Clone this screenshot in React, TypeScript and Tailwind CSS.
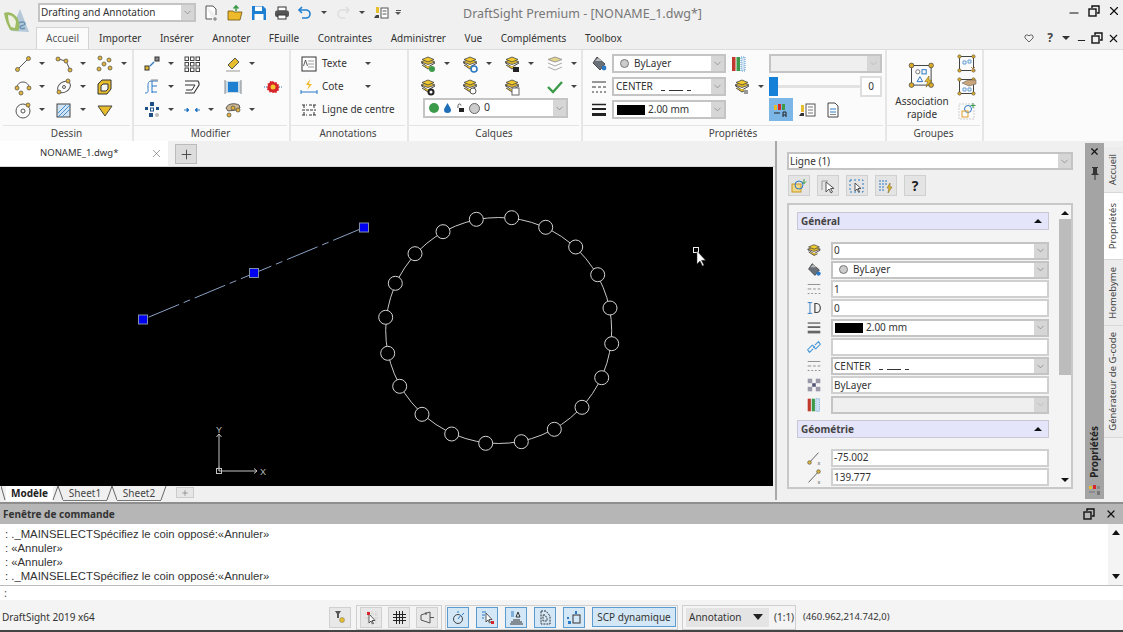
import type { ReactNode } from 'react';
import { ChevronDown, X, Plus, Minus } from 'lucide-react';

// ─── Small parts ──────────────────────────────────────────────────────────────

function Caret() {
  return <span className="ml-[7px] w-0 h-0 flex-shrink-0 border-l-[3px] border-r-[3px] border-t-[3px] border-l-transparent border-r-transparent border-t-[#444]" />;
}

function Svg({ children, size = 18 }: { children: ReactNode; size?: number }) {
  return (
    <svg width={size} height={size} viewBox="0 0 18 18" fill="none" className="flex-shrink-0">
      {children}
    </svg>
  );
}

function Dot({ x, y, r = 2 }: { x: number; y: number; r?: number }) {
  return <circle cx={x} cy={y} r={r} fill="#e3b33b" stroke="#5a5a4a" strokeWidth="0.8" />;
}

function LayerIcon({ badge }: { badge?: ReactNode }) {
  return (
    <Svg>
      <path d="M9 9.5 2 7l7-3 7 3z" fill="#e5bd2d" stroke="#444" strokeWidth="0.8" />
      <path d="M2 7.5 9 12l7-4" fill="none" stroke="#444" strokeWidth="1" />
      <path d="M3 4.5 9 2l6 2.5L9 7z" fill="#f0c92f" stroke="#444" strokeWidth="0.8" />
      <path d="M3 10 9 14l4-2" fill="#e5bd2d" stroke="#444" strokeWidth="0.9" />
      {badge}
    </Svg>
  );
}

function Combo({ className, children, disabled }: { className: string; children?: ReactNode; disabled?: boolean }) {
  return (
    <div className={`flex items-stretch border-2 border-[#c4c4c4] ${disabled ? 'bg-[#efefef]' : 'bg-white'} ${className}`}>
      <div className="flex-1 min-w-0 flex items-center pl-[1px] overflow-hidden whitespace-nowrap">{children}</div>
      <div className="w-[13px] bg-[#d6d6d6] flex items-center justify-center">
        <ChevronDown size={11} strokeWidth={1.2} className={disabled ? 'text-[#aaa]' : 'text-[#666]'} />
      </div>
    </div>
  );
}

function Field({ children }: { children?: ReactNode }) {
  return <div className="h-[18px] flex items-center border-2 border-[#d0d0d0] bg-white pl-[1px] text-[10px] text-[#333] overflow-hidden whitespace-nowrap">{children}</div>;
}

function LinetypeIcon({ faded }: { faded?: boolean }) {
  const c = faded ? '#888' : '#333';
  return (
    <Svg>
      <path d="M2 4h14" stroke={c} />
      <path d="M2 9h4m2 0h3m2 0h3" stroke={c} />
      <path d="M2 14h2m2 0h2m2 0h2m2 0h2" stroke={c} />
    </Svg>
  );
}

function WeightIcon({ faded }: { faded?: boolean }) {
  const c = faded ? '#666' : '#222';
  return (
    <Svg>
      <path d="M2 3.5h14" stroke={c} strokeWidth="1.5" />
      <path d="M2 8h14" stroke={c} strokeWidth="2" />
      <path d="M2 13.5h14" stroke={c} strokeWidth="3" />
    </Svg>
  );
}

function FillIcon() {
  return (
    <Svg>
      <path d="M7 2 15 9l-5 6-7-7z" fill="#6a7078" stroke="#333" strokeWidth="0.8" />
      <path d="M5 6h7l-4-3z" fill="#bbb" />
      <circle cx="14" cy="13" r="2.4" fill="#2b78c4" />
    </Svg>
  );
}

function StripesIcon() {
  return (
    <Svg>
      <rect x="2" y="2" width="3.5" height="14" fill="#c0392b" />
      <rect x="6.5" y="2" width="3.5" height="14" fill="#3c9b4a" />
      <rect x="11" y="2" width="4" height="14" fill="#cfe3f4" stroke="#3a87c8" strokeWidth="0.8" strokeDasharray="1 1" />
    </Svg>
  );
}

// ─── Title bar ────────────────────────────────────────────────────────────────

function Logo() {
  return (
    <svg width="28" height="26" viewBox="0 0 28 26" className="flex-shrink-0 translate-y-[8px]">
      <path d="M18 1 27 24 9 23z" fill="#b4c8d8" />
      <path d="M2 5c5-2 11 1 14 6 2 5 2 9 0 12l-8-1C5 17 3 11 2 5z" fill="#9dbb62" />
      <path d="M6 7c4 0 7 3 8 7l-1 6-4-1C7 15 6 11 6 7z" fill="#eef0e4" />
      <path d="M17 15c3-2 6-1 6 1s-5 1-5 3 3 2 5 1" fill="none" stroke="#6a95b4" strokeWidth="1.5" />
    </svg>
  );
}

function TitleBar() {
  return (
    <div className="h-[27px] flex items-center flex-shrink-0 pl-[2px] pb-[2px]">
      <Logo />
      <Combo className="ml-[8px] w-[158px] h-[19px] text-[10px] text-[#333]">Drafting and Annotation</Combo>
      <div className="ml-[3px] flex items-center">
        <div className="ml-[3px] w-[18px]">
          <Svg><path d="M4 2h7l3 3v6M4 2v13h6" stroke="#555" fill="#fff" /><path d="M13 13v4m-2-2h4" stroke="#777" /></Svg>
        </div>
        <div className="ml-[6px] w-[18px]">
          <Svg><path d="M2 7h5l1 1h8l-2 8H2z" fill="#eeb92a" stroke="#6b5310" strokeWidth="0.8" /><path d="M10 7V2M7.5 4.5 10 2l2.5 2.5" stroke="#3c9b4a" strokeWidth="1.6" /></Svg>
        </div>
        <div className="ml-[6px] w-[18px]">
          <Svg><path d="M2 2h11l3 3v11H2z" fill="#1f7fd1" /><rect x="5" y="2.5" width="7" height="4.5" fill="#fff" /><rect x="4.5" y="10" width="9" height="6" fill="#fff" /></Svg>
        </div>
        <div className="ml-[5px] w-[18px]">
          <Svg><rect x="5" y="3" width="8" height="4" fill="#fff" stroke="#333" /><rect x="2" y="6.5" width="14" height="6.5" rx="2" fill="#555" /><rect x="5" y="11" width="8" height="4" fill="#fff" stroke="#333" /></Svg>
        </div>
        <div className="ml-[5px] w-[18px]">
          <Svg><path d="M6 3 3 6l3 3" stroke="#1f7fd1" strokeWidth="1.6" /><path d="M3 6h7a4 4 0 0 1 0 8H6" stroke="#1f7fd1" strokeWidth="1.6" /></Svg>
        </div>
        <Caret />
        <div className="ml-[7px] w-[18px]">
          <Svg><path d="M12 3l3 3-3 3" stroke="#ddd" strokeWidth="1.5" /><path d="M15 6H8a4 4 0 0 0 0 8h3" stroke="#ddd" strokeWidth="1.5" /></Svg>
        </div>
        <Caret />
        <div className="ml-[7px] w-[18px]">
          <Svg><path d="M4 3h3v6H4z" fill="#e5bd2d" /><path d="M2 14h5v-3H4z" fill="#444" /><rect x="9" y="4" width="7" height="10" fill="#fff" stroke="#555" /><path d="M10.5 7h4m-4 3h4" stroke="#555" /></Svg>
        </div>
        <span className="ml-[5px] flex flex-col items-center gap-[1px]">
          <span className="w-[5px] h-[1px] bg-[#555]" />
          <span className="w-0 h-0 border-l-[3px] border-r-[3px] border-t-[3px] border-l-transparent border-r-transparent border-t-[#555]" />
        </span>
      </div>
      <div className="ml-[62px] pt-[3px] flex-1 text-[12.5px] text-[#777] whitespace-nowrap">DraftSight Premium - [NONAME_1.dwg*]</div>
      <div className="flex items-center gap-[6px] pr-[2px] pb-[4px] text-[#111]">
        <Minus size={14} strokeWidth={2} className="translate-y-[2px]" />
        <RestoreIcon />
        <X size={14} strokeWidth={2} />
      </div>
    </div>
  );
}

function RestoreIcon() {
  return (
    <svg width="12" height="12" viewBox="0 0 12 12" fill="none" stroke="#111" strokeWidth="1.4" className="mx-[1px]">
      <rect x="1" y="4" width="7" height="7" />
      <path d="M4 3V1h7v7H9" />
    </svg>
  );
}

// ─── Ribbon ───────────────────────────────────────────────────────────────────

const TABS = ['Importer', 'Insérer', 'Annoter', 'FEuille', 'Contraintes', 'Administrer', 'Vue', 'Compléments', 'Toolbox'];

function RibbonTabs() {
  return (
    <div className="h-[22px] flex items-end pl-[36px] flex-shrink-0 text-[10px] text-[#333]">
      <div className="h-[22px] w-[53px] flex items-center justify-center bg-[#fbfbfb] border border-b-0 border-[#d4d4d4] text-[#555]">Accueil</div>
      <div className="h-[22px] ml-[10px] flex items-center gap-[18.5px] flex-1">
        {TABS.map(t => <span key={t}>{t}</span>)}
      </div>
      <div className="h-[22px] flex items-center pr-[3px] text-[#111]">
        <svg width="10" height="9" viewBox="0 0 10 9" fill="none" stroke="#666"><path d="M5 8 1 4V2l1-1h2l1 1 1-1h2l1 1v2z" /></svg>
        <span className="ml-[13px] text-[12px] font-bold text-[#444]">?</span>
        <span className="ml-[9px] w-0 h-0 border-l-[4px] border-r-[4px] border-t-[4px] border-l-transparent border-r-transparent border-t-[#333]" />
        <Minus size={11} strokeWidth={2} className="ml-[6px] translate-y-[2px]" />
        <span className="ml-[3px] flex"><RestoreIcon /></span>
        <X size={13} strokeWidth={2} className="ml-[3px]" />
      </div>
    </div>
  );
}

function Group({ label, className, children }: { label: string; className: string; children: ReactNode }) {
  return (
    <div className={`flex-shrink-0 flex flex-col border-r-2 border-[#e6e6e6] ${className}`}>
      <div className="h-[75px] pt-[2px]">{children}</div>
      <div className="h-[16px] mr-[2px] border-t border-[#e4e4e4] text-center text-[10px] leading-[14px] text-[#444]">{label}</div>
    </div>
  );
}

function Cell({ children, caret = true }: { children: ReactNode; caret?: boolean }) {
  return <div className="h-[23px] flex items-center">{children}{caret && <Caret />}</div>;
}

function DessinGroup() {
  return (
    <Group label="Dessin" className="w-[131px]">
      <div className="grid grid-cols-[41px_41px_41px] pl-[11px]">
        <Cell><Svg><path d="M3 15 15 3" stroke="#555" /><Dot x={3.5} y={14.5} /><Dot x={14.5} y={3.5} /></Svg></Cell>
        <Cell><Svg><path d="M3 4 11 6l4 9" stroke="#555" /><Dot x={3} y={4} /><Dot x={11} y={6} /><Dot x={15} y={15} /></Svg></Cell>
        <Cell><Svg><Dot x={4} y={3} /><Dot x={13} y={5} /><Dot x={8} y={9} /><Dot x={3} y={14} /><Dot x={14} y={13} /></Svg></Cell>
        <Cell><Svg><path d="M3 10C3 2 15 2 15 10" stroke="#555" /><Dot x={3} y={10} /><Dot x={15} y={10} /><Dot x={7} y={15} /></Svg></Cell>
        <Cell><Svg><ellipse cx="9" cy="9" rx="7" ry="5" transform="rotate(-35 9 9)" stroke="#555" /><circle cx="9" cy="9" r="1.5" stroke="#555" /><Dot x={13} y={3} /><Dot x={4} y={14} /></Svg></Cell>
        <Cell caret={false}><Svg><path d="M6 2h9v9l-4 5H2V6z" fill="#e5bd2d" stroke="#333" /><path d="M7 6h5v5l-2 2H5V8z" fill="#f5f5f5" stroke="#333" /></Svg></Cell>
        <Cell><Svg><circle cx="9" cy="10" r="7" stroke="#555" /><circle cx="9" cy="10" r="2" stroke="#555" /><Dot x={14} y={4} /></Svg></Cell>
        <Cell><Svg><rect x="2" y="3" width="13" height="13" fill="#cfe3f4" stroke="#444" /><path d="M3 12 11 4M3 16 15 4M7 16l8-8" stroke="#4a90d0" /></Svg></Cell>
        <Cell caret={false}><Svg><path d="M2 5h14L9 15z" fill="#e8bb2a" stroke="#444" /></Svg></Cell>
      </div>
    </Group>
  );
}

function ModifierGroup() {
  return (
    <Group label="Modifier" className="w-[157px]">
      <div className="grid grid-cols-[40px_41px_40px_18px] pl-[9px]">
        <Cell><Svg><rect x="2" y="11" width="4" height="4" fill="#e5bd2d" stroke="#333" /><rect x="12" y="2" width="4" height="4" fill="#888" stroke="#333" /><path d="M7 11l4-4" stroke="#2b78c4" strokeWidth="1.2" /></Svg></Cell>
        <Cell caret={false}><Svg>{[2, 7.5, 13].map(x => [2, 7.5, 13].map(y => <rect key={`${x}-${y}`} x={x} y={y} width="3.5" height="3.5" stroke="#444" />))}</Svg></Cell>
        <Cell><Svg><path d="M4 10 11 3l4 4-7 7z" fill="#e5bd2d" stroke="#555" /><path d="M2 16h14" stroke="#999" /></Svg></Cell>
        <div />
        <Cell><Svg><path d="M2 15c4 0 3-2 3-6s0-6 4-6h6M9 15V3M9 8h5M9 14h5" stroke="#2b78c4" /><path d="M8 2h7" stroke="#888" /></Svg></Cell>
        <Cell caret={false}><Svg><path d="M2 3h13l1 2v2l-5 8H2" stroke="#333" strokeWidth="1.1" /><path d="M2 7h10l-3 5H3" stroke="#333" /></Svg></Cell>
        <Cell caret={false}><Svg><rect x="1" y="3" width="16" height="12" fill="#c9d9e6" /><rect x="4" y="4" width="10" height="10" fill="#1f7fd1" /><path d="M1 2v14M17 2v14" stroke="#888" /></Svg></Cell>
        <Cell caret={false}><Svg><path d="M0 9h3m12 0h3" stroke="#2b78c4" strokeDasharray="1 1" /><path d="M9 3l1.500 1.500 2-.5.5 2 2 .5-.5 2 1 .5-1 1.500.500 2-2 .5-.5 2-2-.5L9 15l-1.500-1-2 .5-.5-2-2-.500.500-2L3 9l1-1.500-.5-2 2-.5.5-2 2 .5z" fill="#d8252a" /><circle cx="9" cy="9" r="2.500" fill="#f3c72f" /></Svg></Cell>
        <Cell><Svg><rect x="7" y="1" width="4" height="4" fill="#1c4f86" /><rect x="2" y="6" width="3" height="3" fill="#1c4f86" /><rect x="7.5" y="7" width="3" height="3" stroke="#1c4f86" /><rect x="13" y="6" width="3" height="3" fill="#1c4f86" /><rect x="6" y="12" width="4" height="4" fill="#1c4f86" /><circle cx="14" cy="14" r="2" fill="#bbb" /></Svg></Cell>
        <Cell><Svg><path d="M1 9h5m0 0-2-2v4zM17 9h-5m0 0 2-2v4z" stroke="#2b78c4" fill="#2b78c4" /></Svg></Cell>
        <Cell><Svg><path d="M2 7c2-5 9-5 13-3l1 3-4 2-8 1z" fill="#cdb68f" stroke="#555" /><Dot x={5} y={14} /><Dot x={9} y={7} /><Dot x={14} y={9} /></Svg></Cell>
        <div />
      </div>
    </Group>
  );
}

function AnnotationsGroup() {
  return (
    <Group label="Annotations" className="w-[118px]">
      <div className="pl-[9px] text-[10px] text-[#333]">
        <div className="h-[23px] flex items-center">
          <Svg><rect x="2" y="2" width="14" height="14" stroke="#333" fill="#fff" /><path d="M8 6h6M8 9h6M8 12h6" stroke="#999" /><path d="M3.500 11 5.500 5l2 6" stroke="#333" strokeWidth="0.800" /></Svg>
          <span className="ml-[4px] w-[36px]">Texte</span><Caret />
        </div>
        <div className="h-[23px] flex items-center">
          <Svg><path d="M10 1 6 7h3l-2 5 5-6H9z" fill="#eeb92a" /><path d="M1 14h16M1 12v4m16-4v4" stroke="#2b78c4" /></Svg>
          <span className="ml-[4px] w-[36px]">Cote</span><Caret />
        </div>
        <div className="h-[23px] flex items-center whitespace-nowrap">
          <Svg><path d="M2 4h5m2 0h7M2 14h5m2 0h7M2 9h14M4 4v3m0 4v3M14 4v3m0 4v3" stroke="#333" strokeDasharray="3 1" /></Svg>
          <span className="ml-[4px]">Ligne de centre</span>
        </div>
      </div>
    </Group>
  );
}

function CalquesGroup() {
  return (
    <Group label="Calques" className="w-[174px]">
      <div className="grid grid-cols-[42px_42px_43px_42px] pl-[10px]">
        <Cell><LayerIcon badge={<circle cx="13" cy="14" r="3" fill="#3c9b4a" />} /></Cell>
        <Cell><LayerIcon badge={<circle cx="13" cy="14" r="3" stroke="#2b78c4" strokeWidth="1.6" fill="#fff" />} /></Cell>
        <Cell><LayerIcon badge={<rect x="10" y="12" width="6" height="5" fill="#222" />} /></Cell>
        <Cell><Svg><path d="M9 7 2 4.500 9 2l7 2.500z" fill="#e5d58a" stroke="#999" /><path d="M2 8l7 3 7-3M2 12l7 3 7-3" stroke="#aaa" /></Svg></Cell>
        <Cell caret={false}><LayerIcon badge={<circle cx="12" cy="14" r="2.500" fill="#fff" stroke="#222" strokeWidth="2" />} /></Cell>
        <Cell caret={false}><LayerIcon badge={<circle cx="12" cy="13" r="3" fill="#fff" stroke="#555" />} /></Cell>
        <Cell caret={false}><LayerIcon badge={<rect x="9" y="10" width="7" height="7" fill="#fff" stroke="#666" />} /></Cell>
        <Cell><Svg><path d="M2 9l5 5 9-10" stroke="#3c9b4a" strokeWidth="2.400" /></Svg></Cell>
      </div>
      <Combo className="ml-[14px] w-[145px] h-[20px] text-[10.5px] text-[#333]">
        <span className="flex items-center gap-[4px] pl-[3px]">
          <span className="w-[10px] h-[10px] rounded-full bg-[#3c9b4a]" />
          <svg width="9" height="10" viewBox="0 0 9 10"><path d="M4.500 0C3 3 1 5 1 7a3.500 3 0 0 0 7 0c0-2-2-4-3.500-7z" fill="#1f6fb8" /></svg>
          <svg width="9" height="10" viewBox="0 0 9 10" fill="none"><path d="M2 5V2.500a1.500 1.500 0 0 1 3 0" stroke="#555" /><rect x="3" y="5" width="5" height="4" fill="#222" /></svg>
          <span className="w-[11px] h-[11px] rounded-full bg-[#ccc] border border-[#666]" />
          <span>0</span>
        </span>
      </Combo>
    </Group>
  );
}

function Linetype() {
  return (
    <span className="flex items-center">
      <span>CENTER</span>
      <span className="ml-[8px] flex items-end gap-[4px] h-[8px]">
        <span className="w-[4px] h-px bg-[#333]" />
        <span className="w-[14px] h-px bg-[#333]" />
        <span className="w-[4px] h-px bg-[#333]" />
      </span>
    </span>
  );
}

function ProprietesGroup() {
  return (
    <Group label="Propriétés" className="w-[304px]">
      <div className="grid grid-cols-[22px_114px_43px_113px] grid-rows-[23px_23px_23px] pl-[7px] items-center text-[10px] text-[#333]">
        <FillIcon />
        <Combo className="h-[19px]"><span className="w-[9px] h-[9px] rounded-full bg-[#ccc] border border-[#777] ml-[5px] mr-[5px]" />ByLayer</Combo>
        <div className="pl-[4px]"><StripesIcon /></div>
        <Combo className="h-[19px]" disabled />

        <LinetypeIcon />
        <Combo className="h-[19px]"><span className="pl-[1px]"><Linetype /></span></Combo>
        <div className="flex items-center pl-[7px]"><LayerIcon badge={<rect x="11" y="12" width="4" height="4" fill="#999" />} /><Caret /></div>
        <div className="flex items-center">
          <div className="relative flex-1 h-[3px] bg-[#e2e2e2]">
            <div className="absolute -top-[8px] left-0 w-[9px] h-[19px] bg-[#1480d8]" />
          </div>
          <div className="w-[22px] h-[21px] border-2 border-[#dedede] bg-white flex items-center justify-center">0</div>
        </div>

        <WeightIcon />
        <Combo className="h-[19px]"><span className="w-[28px] h-[10px] bg-black ml-[2px] mr-[3px]" />2.00 mm</Combo>
        <div />
        <div className="flex items-center h-[23px]">
          <div className="w-[24px] h-[23px] bg-[#7cb6e6] flex items-center justify-center">
            <Svg><rect x="2" y="4" width="3" height="5" fill="#e5bd2d" /><rect x="6" y="3" width="3" height="6" fill="#d8252a" /><rect x="10" y="3" width="3" height="6" fill="#3c9b4a" /><path d="M2 12h6m3 4v-5h3v5m-3-2h3" stroke="#222" /></Svg>
          </div>
          <div className="ml-[5px]">
            <Svg><path d="M3 4h3v7H3z" fill="#e5bd2d" /><path d="M1 15h5v-3H3z" fill="#333" /><rect x="8" y="3" width="9" height="12" fill="#fff" stroke="#555" /><path d="M10 6h5m-5 3h5m-5 3h5" stroke="#777" /></Svg>
          </div>
          <div className="ml-[8px]">
            <Svg><path d="M4 2h7l3 3v11H4z" fill="#fff" stroke="#444" /><path d="M6 8h6M6 11h6" stroke="#2b78c4" /><path d="M6 13.500h6" stroke="#888" /></Svg>
          </div>
        </div>
      </div>
    </Group>
  );
}

function GroupFrame({ children, big }: { children?: ReactNode; big?: boolean }) {
  return (
    <svg width={big ? 28 : 20} height={big ? 28 : 20} viewBox="0 0 20 20" fill="none">
      <rect x="2.500" y="2.500" width="14" height="14" stroke="#444" strokeWidth={big ? 0.7 : 1} />
      <circle cx="2.500" cy="2.500" r="1.700" fill="#d9a92a" stroke="#444" strokeWidth="0.500" />
      <circle cx="16.500" cy="2.500" r="1.700" fill="#d9a92a" stroke="#444" strokeWidth="0.500" />
      <circle cx="2.500" cy="16.500" r="1.700" fill="#d9a92a" stroke="#444" strokeWidth="0.500" />
      <circle cx="16.500" cy="16.500" r="1.700" fill="#d9a92a" stroke="#444" strokeWidth="0.500" />
      {children}
    </svg>
  );
}

function GroupesGroup() {
  return (
    <Group label="Groupes" className="w-[97px]">
      <div className="flex">
        <div className="w-[70px] flex flex-col items-center">
          <div className="h-[43px] flex items-center pt-[4px]">
            <GroupFrame big>
              <circle cx="7" cy="7" r="1.500" stroke="#777" strokeWidth="0.700" />
              <rect x="10" y="5.500" width="3" height="3" stroke="#2b78c4" strokeWidth="0.700" />
              <path d="M8.500 10.500 10.500 14h-4z" stroke="#2b78c4" strokeWidth="0.700" />
              <path d="M15 10l-3 4h2l-1 4 4-5h-2z" fill="#e5bd2d" stroke="#775a10" strokeWidth="0.400" />
            </GroupFrame>
          </div>
          <div className="text-center text-[10px] leading-[13px] text-[#333]">Association<br />rapide</div>
        </div>
        <div className="w-[20px] flex flex-col">
          <div className="h-[23px] flex items-center">
            <GroupFrame><path d="M6 7h3v3H6zM11 6h3v3h-3z" stroke="#2b78c4" strokeWidth="0.700" /><path d="M14 13l4 4m0-4-4 4" stroke="#b58a55" /></GroupFrame>
          </div>
          <div className="h-[23px] flex items-center">
            <GroupFrame><path d="M5 6l6-3 8 0v4l-7 2z" fill="#c9a57c" stroke="#555" strokeWidth="0.500" /><path d="M6 11h3v3H6zM11 11h3v3h-3z" stroke="#2b78c4" strokeWidth="0.700" /></GroupFrame>
          </div>
          <div className="h-[25px] flex items-center">
            <svg width="20" height="20" viewBox="0 0 20 20" fill="none">
              <rect x="2" y="3" width="15" height="15" stroke="#ccc" strokeDasharray="2 1" />
              <circle cx="11" cy="8" r="3.500" stroke="#2b78c4" />
              <rect x="5" y="10" width="6" height="6" stroke="#e0a030" />
              <path d="M16 2v5m-2.500-2.500h5" stroke="#3c9b4a" />
            </svg>
          </div>
        </div>
      </div>
    </Group>
  );
}

function Ribbon() {
  return (
    <div className="h-[92px] flex-shrink-0 flex bg-[#fbfbfb] border-t border-[#dcdcdc] pl-[3px]">
      <DessinGroup />
      <ModifierGroup />
      <AnnotationsGroup />
      <CalquesGroup />
      <ProprietesGroup />
      <GroupesGroup />
      <div className="flex-1" />
    </div>
  );
}

// ─── Drawing area ─────────────────────────────────────────────────────────────

const CIRCLES: [number, number][] = [
  [476.3, 219.3], [511.7, 217.7], [545.7, 227.3], [575.7, 247], [597.7, 274.7],
  [610, 308], [611.7, 343.7], [601.7, 377.7], [582, 407.3], [554.3, 429.3],
  [521.3, 441.7], [485.7, 443.3], [451.7, 434], [422, 414.3], [399.7, 386.3],
  [387.7, 353.3], [385.7, 317.3], [395.3, 283.3], [415, 253.7], [443, 231.7],
];

function Drawing() {
  return (
    <svg viewBox="0 167 773 319" className="block w-[773px] h-[319px] bg-black">
      <circle cx="498.700" cy="330.500" r="113" fill="none" stroke="#c8c8c8" />
      {CIRCLES.map(([x, y]) => (
        <circle key={x} cx={x} cy={y} r="7" fill="#000" stroke="#d4d4d4" />
      ))}
      <path d="M143 319.500 364 227.500" stroke="#8aa0c4" strokeDasharray="33 5 7 5" strokeDashoffset="-6" />
      {[[143, 319.5], [254, 273], [364, 227.5]].map(([x, y]) => (
        <rect key={x} x={x - 4.5} y={y - 4.5} width="9" height="9" fill="#0000f0" stroke="#7f8fa8" />
      ))}
      <path d="M219 471V434M219 471h38" stroke="#c4c4c4" />
      <rect x="216.500" y="468.500" width="5" height="5" fill="none" stroke="#c4c4c4" />
      <path d="M219 471v-5m-2.500 2.500h5" stroke="#c4c4c4" strokeWidth="0.500" />
      <path d="M216.500 437l2.500-3 2.500 3M254 468.500l3 2.500-3 2.500" fill="none" stroke="#c4c4c4" />
      <text x="216" y="433" fill="#bbb" fontSize="9" fontFamily="Liberation Sans">Y</text>
      <text x="260" y="475" fill="#bbb" fontSize="9" fontFamily="Liberation Sans">X</text>
      <rect x="693.500" y="247.500" width="5" height="5" fill="none" stroke="#eee" />
      <path d="M697 251v13l3-3 2.500 5 1.500-.7-2.500-5h4z" fill="#fff" stroke="#333" strokeWidth="0.500" />
    </svg>
  );
}

function SheetSlash({ last }: { last?: boolean }) {
  return (
    <svg width="12" height="15" viewBox="0 0 12 15" fill="none" stroke="#666" className={last ? '-ml-[1px]' : '-mx-[1px]'}>
      <path d="M1 14 6 0" />
      {!last && <path d="M6 0 11 14" />}
    </svg>
  );
}

function SheetTabs() {
  return (
    <div className="h-[16px] flex items-start text-[10px] pl-[1px] text-[#444] overflow-hidden">
      <svg width="5" height="15" viewBox="0 0 5 15" fill="none" stroke="#666"><path d="M0 0 4 14" /></svg>
      <div className="w-[47px] h-[15px] bg-white text-center font-bold leading-[14px] text-[#222]">Modèle</div>
      <SheetSlash />
      <div className="w-[44px] h-[15px] bg-[#f0f0f0] border-b border-[#777] text-center leading-[14px]">Sheet1</div>
      <SheetSlash />
      <div className="w-[44px] h-[15px] bg-[#f0f0f0] border-b border-[#777] text-center leading-[14px]">Sheet2</div>
      <SheetSlash last />
      <div className="ml-[4px] mt-[1px] w-[18px] h-[11px] bg-[#e6e6e6] border border-[#ccc] flex items-center justify-center">
        <Plus size={8} className="text-[#777]" />
      </div>
    </div>
  );
}

function DrawingColumn() {
  return (
    <div className="w-[775px] flex-shrink-0 flex flex-col">
      <div className="h-[26px] flex items-stretch border-b border-[#d8d8d8] bg-[#f0f0f0]">
        <div className="w-[168px] bg-white flex items-center text-[9.5px] text-[#333] pl-[40px] pr-[5px] justify-between">
          NONAME_1.dwg*
          <X size={13} strokeWidth={1} className="text-[#555]" />
        </div>
        <div className="ml-[7px] mt-[3px] w-[22px] h-[20px] bg-[#dcdcdc] border border-[#bbb] flex items-center justify-center">
          <Plus size={15} strokeWidth={1.5} className="text-[#444]" />
        </div>
      </div>
      <Drawing />
      <SheetTabs />
    </div>
  );
}

// ─── Properties panel ─────────────────────────────────────────────────────────

function ToolBtn({ children, className }: { children: ReactNode; className: string }) {
  return <div className={`h-[21px] w-[22px] bg-[#e4e4e4] border border-[#d0d0d0] flex items-center justify-center ${className}`}>{children}</div>;
}

function SectionHeader({ title }: { title: string }) {
  return (
    <div className="h-[18px] flex items-center justify-between bg-[#e4e4fa] border border-[#c8c8d4] pl-[3px] pr-[6px] text-[10px] font-bold text-[#444]">
      {title}
      <span className="w-0 h-0 border-l-[4px] border-r-[4px] border-b-[4px] border-l-transparent border-r-transparent border-b-[#111]" />
    </div>
  );
}

function PropRow({ icon, children }: { icon: ReactNode; children: ReactNode }) {
  return (
    <div className="grid grid-cols-[34px_218px] items-center">
      <div className="flex justify-center scale-90">{icon}</div>
      {children}
    </div>
  );
}

function PropertiesPanel() {
  return (
    <div className="flex-1 flex min-w-0 pt-[2px] border-l-2 border-[#a8a8a8] mb-[2px]">
      <div className="w-[308px] flex-shrink-0 pl-[10px] pt-[9px] text-[10px] text-[#333]">
        <Combo className="w-[286px] h-[18px]">Ligne (1)</Combo>
        <div className="mt-[5px] flex pl-[1px] gap-[7px]">
          <ToolBtn className="">
            <svg width="16" height="16" viewBox="0 0 16 16" fill="none"><rect x="1" y="6" width="9" height="8" fill="#f1d88a" stroke="#c89a20" /><circle cx="8" cy="7" r="4" stroke="#2b78c4" /><path d="M13 1v5M11 3.500l2 2 2-2" stroke="#3c9b4a" /></svg>
          </ToolBtn>
          <ToolBtn className="">
            <svg width="16" height="16" viewBox="0 0 16 16" fill="none"><path d="M2 3h6M2 3v9" stroke="#999" /><path d="M6 4v10l3-3 2 4 1.500-1-2-3.500h3.500z" fill="#fff" stroke="#555" /></svg>
          </ToolBtn>
          <ToolBtn className="">
            <svg width="16" height="16" viewBox="0 0 16 16" fill="none"><rect x="1" y="2" width="13" height="12" stroke="#2b78c4" strokeDasharray="2 2" /><path d="M6 5v8l2-2 1.500 3 1-.5-1.500-3h3z" fill="#fff" stroke="#555" /></svg>
          </ToolBtn>
          <ToolBtn className="">
            <svg width="16" height="16" viewBox="0 0 16 16" fill="none"><path d="M1 3h9M1 6h9M1 9h5M1 12h5" stroke="#2b78c4" strokeDasharray="2 1" /><path d="M12 5 9 10h2l-1 5 4-6h-2z" fill="#e5bd2d" stroke="#775a10" strokeWidth="0.500" /></svg>
          </ToolBtn>
          <ToolBtn className="font-bold text-[14px] text-[#222]">?</ToolBtn>
        </div>
        <div className="mt-[7px] w-[286px] h-[286px] border-2 border-[#c8c8c8] flex overflow-hidden bg-[#f4f4f4]">
          <div className="w-[270px] flex-shrink-0 pl-[8px] pt-[7px]">
            <div className="w-[252px]">
              <SectionHeader title="Général" />
              <div className="mt-[11px] grid auto-rows-[19.25px] items-center">
                <PropRow icon={<LayerIcon />}><Combo className="h-[18px]">0</Combo></PropRow>
                <PropRow icon={<FillIcon />}><Combo className="h-[18px]"><span className="w-[9px] h-[9px] rounded-full bg-[#ccc] border border-[#777] ml-[5px] mr-[5px]" />ByLayer</Combo></PropRow>
                <PropRow icon={<LinetypeIcon faded />}><Field>1</Field></PropRow>
                <PropRow icon={<Svg><path d="M2 3h5M2 15h5M4.500 3v12" stroke="#2b78c4" /><path d="M10 4h2a4 5 0 0 1 0 10h-2z" stroke="#444" strokeWidth="1.300" /></Svg>}><Field>0</Field></PropRow>
                <PropRow icon={<WeightIcon faded />}><Combo className="h-[18px]"><span className="w-[28px] h-[10px] bg-black ml-[1px] mr-[3px]" />2.00 mm</Combo></PropRow>
                <PropRow icon={<Svg><path d="M8 11 4 15 2 12l5-5 3 2M10 7l4-4 2 3-5 5-3-2" stroke="#4a9ad8" strokeWidth="1.300" /></Svg>}><Field /></PropRow>
                <PropRow icon={<LinetypeIcon faded />}><Combo className="h-[18px]"><Linetype /></Combo></PropRow>
                <PropRow icon={<Svg><rect x="2" y="2" width="5" height="5" fill="#99a" /><rect x="11" y="2" width="5" height="5" fill="#99a" /><rect x="7" y="7" width="4" height="4" fill="#557" /><rect x="2" y="11" width="5" height="5" fill="#99a" /><rect x="11" y="11" width="5" height="5" fill="#99a" /></Svg>}><Field>ByLayer</Field></PropRow>
                <PropRow icon={<StripesIcon />}><Combo className="h-[18px]" disabled /></PropRow>
              </div>
              <div className="mt-[6px]"><SectionHeader title="Géométrie" /></div>
              <div className="mt-[10px] grid auto-rows-[19.25px] items-center">
                <PropRow icon={<Svg><path d="M3 15 14 3" stroke="#555" /><Dot x={4} y={14} /><text x="13" y="17" fontSize="6" fill="#555">x</text></Svg>}><Field>-75.002</Field></PropRow>
                <PropRow icon={<Svg><path d="M3 15 14 3" stroke="#555" /><Dot x={14} y={3} /><text x="13" y="17" fontSize="6" fill="#555">x</text></Svg>}><Field>139.777</Field></PropRow>
                <PropRow icon={<div className="h-[18px]" />}><Field /></PropRow>
              </div>
            </div>
          </div>
          <div className="w-[12px] flex flex-col items-center pt-[6px]">
            <span className="w-0 h-0 border-l-[4px] border-r-[4px] border-b-[4px] border-l-transparent border-r-transparent border-b-[#111]" />
            <div className="mt-[4px] w-[12px] h-[156px] bg-[#bcbcbc]" />
            <div className="flex-1" />
            <span className="mb-[5px] w-0 h-0 border-l-[4px] border-r-[4px] border-t-[4px] border-l-transparent border-r-transparent border-t-[#111]" />
          </div>
        </div>
      </div>
      <div className="w-[19px] flex-shrink-0 h-[356px] bg-[#a4a4a4] flex flex-col items-center pt-[3px] text-[#111]">
        <X size={11} strokeWidth={2.5} />
        <svg width="10" height="14" viewBox="0 0 10 14" className="mt-[9px]" fill="#333"><path d="M2 1h6v1H7v5l2 2H1l2-2V2H2zM4.500 9h1v5h-1z" /></svg>
        <div className="flex-1" />
        <span className="[writing-mode:vertical-rl] rotate-180 text-[10px] font-bold text-[#222]">Propriétés</span>
        <svg width="14" height="12" viewBox="0 0 14 12" className="mt-[6px] mb-[3px]"><rect x="1" y="2" width="3" height="3" fill="#e5bd2d" /><rect x="5" y="1" width="3" height="4" fill="#d8252a" /><rect x="9" y="2" width="3" height="3" fill="#888" /><path d="M1 8h6" stroke="#777" /><path d="M9 7h3v4H9z" fill="#777" /></svg>
      </div>
      <div className="flex-1 flex flex-col pt-[4px] text-[9.5px] text-[#444]">
        <SideTab className="h-[46px] bg-[#ececec]">Accueil</SideTab>
        <SideTab className="h-[67px] bg-white">Propriétés</SideTab>
        <SideTab className="h-[66px] bg-[#ececec]">Homebyme</SideTab>
        <SideTab className="h-[112px] bg-[#ececec]">Générateur de G-code</SideTab>
      </div>
    </div>
  );
}

function SideTab({ children, className }: { children: ReactNode; className: string }) {
  return (
    <div className={`flex items-center justify-center border-b border-[#d8d8d8] ${className}`}>
      <span className="[writing-mode:vertical-rl] rotate-180 whitespace-nowrap">{children}</span>
    </div>
  );
}

// ─── Command window ───────────────────────────────────────────────────────────

const COMMAND_LINES = [
  ': ._MAINSELECTSpécifiez le coin opposé:«Annuler»',
  ': «Annuler»',
  ': «Annuler»',
  ': ._MAINSELECTSpécifiez le coin opposé:«Annuler»',
];

function CommandWindow() {
  return (
    <div className="flex-shrink-0 border-t-2 border-[#8e8e8e]">
      <div className="h-[20px] flex items-center justify-between bg-[#b6b6b6] pl-[3px] pr-[6px] text-[10px] font-bold text-[#333]">
        Fenêtre de commande
        <div className="flex items-center gap-[9px]">
          <RestoreIcon />
          <X size={12} strokeWidth={2.5} className="text-[#111]" />
        </div>
      </div>
      <div className="h-[62px] flex bg-white border-b border-[#bbb] [font-family:'Liberation_Sans',sans-serif] text-[11.3px] text-[#333]">
        <div className="flex-1 pl-[5px] pt-[3px] leading-[14px] whitespace-nowrap">
          {COMMAND_LINES.map((l, i) => <div key={i}>{l}</div>)}
        </div>
        <div className="w-[15px] bg-[#f4f4f4] flex flex-col items-center justify-between py-[6px]">
          <span className="w-0 h-0 border-l-[4px] border-r-[4px] border-b-[5px] border-l-transparent border-r-transparent border-b-[#111]" />
          <span className="w-0 h-0 border-l-[4px] border-r-[4px] border-t-[5px] border-l-transparent border-r-transparent border-t-[#111]" />
        </div>
      </div>
      <div className="h-[14px] bg-white pl-[4px] text-[11px] leading-[14px] text-[#555]">:</div>
    </div>
  );
}

// ─── Status bar ───────────────────────────────────────────────────────────────

function StatusBtn({ children, on }: { children: ReactNode; on?: boolean }) {
  return (
    <div className={`w-[22px] h-[21px] flex items-center justify-center border ${on ? 'bg-[#d4e7f6] border-[#5a9ccf]' : 'bg-[#e8e8e8] border-[#d0d0d0]'}`}>
      {children}
    </div>
  );
}

function StatusBar() {
  return (
    <div className="flex-1 flex items-center bg-[#f4f4f4] pl-[2px] pt-[4px] text-[10px] text-[#333] border-b-2 border-[#444]">
      <span className="w-[327px] flex-shrink-0">DraftSight 2019 x64</span>
      <StatusBtn>
        <svg width="14" height="14" viewBox="0 0 14 14"><path d="M2 1h6L6 4v4H4V4z" fill="#555" /><circle cx="9" cy="10" r="2.500" fill="#e5bd2d" stroke="#777" strokeWidth="0.500" /></svg>
      </StatusBtn>
      <div className="ml-[5px] h-[25px] flex items-center gap-[6px] px-[3px] border border-[#cfcfcf]">
        <StatusBtn>
          <svg width="15" height="15" viewBox="0 0 15 15" fill="none"><path d="M1 4h13M1 8h13M4 1v13M8 1v13M12 1v13" stroke="#ccc" strokeDasharray="1 1" /><path d="M5 4v9l2-2 1.500 3 1-.5-1.500-3h3z" fill="#fff" stroke="#333" strokeWidth="0.800" /><rect x="3" y="2" width="3" height="3" fill="#d8252a" /></svg>
        </StatusBtn>
        <StatusBtn>
          <svg width="15" height="15" viewBox="0 0 15 15" fill="none" stroke="#222"><path d="M1 4.500h13M1 7.500h13M1 10.500h13M4.500 1v13M7.500 1v13M10.500 1v13" /></svg>
        </StatusBtn>
        <StatusBtn>
          <svg width="15" height="15" viewBox="0 0 15 15" fill="none" stroke="#555"><path d="M1 5 10 2v11L1 10zM10 7.500h4M6 2v3" /></svg>
        </StatusBtn>
      </div>
      <div className="ml-[3px] h-[25px] flex items-center gap-[7px] px-[1px] border border-[#cfcfcf]">
        <StatusBtn on>
          <svg width="15" height="15" viewBox="0 0 15 15" fill="none" stroke="#444"><circle cx="7" cy="9" r="4.500" /><path d="M7 1v2M13 3l-2 2M7 9l3-4" stroke="#2b78c4" /></svg>
        </StatusBtn>
        <StatusBtn on>
          <svg width="15" height="15" viewBox="0 0 15 15" fill="none"><path d="M2 2h4M2 5h3M2 8h2" stroke="#2b78c4" /><path d="M6 3v9l2-2 1.500 3 1-.5-1.500-3h3z" fill="#fff" stroke="#333" strokeWidth="0.800" /><rect x="11" y="11" width="3" height="3" fill="#d8252a" /></svg>
        </StatusBtn>
        <StatusBtn on>
          <svg width="15" height="15" viewBox="0 0 15 15" fill="none" stroke="#333"><path d="M2 2h3M2 4h3M2 6h3" stroke="#2b78c4" /><path d="M9 2 7 7h4zM4 10h7M2 12h11M1 14h13" /></svg>
        </StatusBtn>
        <StatusBtn on>
          <svg width="15" height="15" viewBox="0 0 15 15" fill="none" stroke="#333" strokeDasharray="2 1"><path d="M3 1h5l4 5v8H3z" /><path d="M5 5h2l2 3v3H5z" /></svg>
        </StatusBtn>
        <StatusBtn on>
          <svg width="15" height="15" viewBox="0 0 15 15" fill="none"><rect x="6" y="5" width="7" height="8" stroke="#333" /><path d="M9 1v3M1 7v2" stroke="#2b78c4" strokeWidth="2" /><rect x="1" y="11" width="3" height="3" fill="#2b78c4" /></svg>
        </StatusBtn>
        <div className="w-[84px] h-[20px] flex items-center justify-center bg-[#d4e7f6] border border-[#5a9ccf] text-[10px] whitespace-nowrap">SCP dynamique</div>
      </div>
      <div className="ml-[4px] h-[25px] w-[114px] flex items-center pl-[3px] border border-[#cfcfcf] whitespace-nowrap">
        <div className="w-[83px] h-[19px] flex items-center justify-between bg-[#e4e4e4] pl-[3px] pr-[6px]">
          Annotation
          <span className="w-0 h-0 border-l-[5px] border-r-[5px] border-t-[6px] border-l-transparent border-r-transparent border-t-[#222]" />
        </div>
        <span className="ml-[5px]">(1:1)</span>
      </div>
      <span className="ml-[7px] text-[9.5px]">(460.962,214.742,0)</span>
    </div>
  );
}

// ─── App ──────────────────────────────────────────────────────────────────────

export default function App() {
  return (
    <div className="w-[1123px] h-[632px] flex flex-col overflow-hidden bg-[#f0f0f0] [font-family:'Noto_Sans',sans-serif]">
      <TitleBar />
      <RibbonTabs />
      <Ribbon />
      <div className="h-[361px] flex-shrink-0 flex">
        <DrawingColumn />
        <PropertiesPanel />
      </div>
      <CommandWindow />
      <StatusBar />
    </div>
  );
}
